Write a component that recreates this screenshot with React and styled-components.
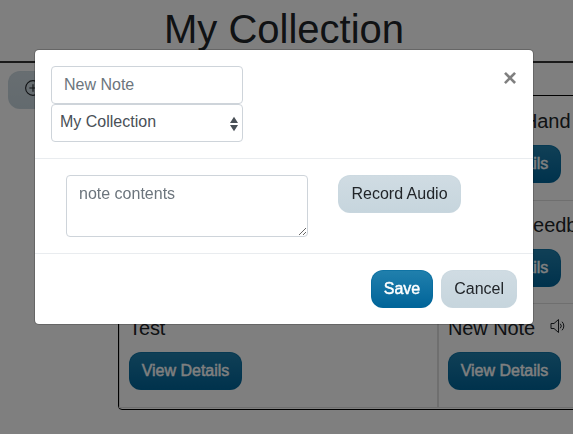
import React from "react";
import styled, { createGlobalStyle, css } from "styled-components";

const GlobalStyle = createGlobalStyle`
  *, *::before, *::after { box-sizing: border-box; }
  body {
    margin: 0;
    overflow: hidden;
    background: #fff;
    color: #212529;
    font: 400 16px/1.5 "Liberation Sans", Arial, sans-serif;
  }
`;

const Page = styled.div`
  height: 434px;
  overflow: hidden;
`;

const PageHeader = styled.header`
  height: 63px;
  padding-top: 5px;
  padding-right: 5px;
  border-bottom: 2px solid #343434;
  text-align: center;
`;

const PageTitle = styled.h1`
  margin: 0;
  font-size: 40px;
  font-weight: 400;
  line-height: 48px;
`;

const Content = styled.main`
  display: flex;
  align-items: flex-start;
`;

const variants = {
  primary: css`
    color: #fff;
    background: linear-gradient(180deg, #2180ad, #006499) border-box;
    border-color: rgba(0, 104, 156, 0.5);
    -webkit-text-stroke: 0.45px #fff;
  `,
  light: css`
    color: #212529;
    background: linear-gradient(180deg, #d0dce3, #c6d5dd) border-box;
    border-color: rgba(201, 215, 223, 0.5);
  `,
};

const Button = styled.button`
  display: inline-block;
  width: ${({ $width }) => ($width ? `${$width}px` : "auto")};
  height: 38px;
  padding: 6px 0;
  ${({ $width }) => !$width && "padding: 6px 12px;"}
  border: 1px solid transparent;
  border-radius: 12px;
  font: inherit;
  line-height: 24px;
  white-space: nowrap;
  ${({ $variant }) => variants[$variant]}
`;

const AddButton = styled(Button)`
  flex: none;
  display: flex;
  align-items: flex-start;
  width: 52px;
  margin: 8px 0 0 8px;
  padding: 8px 16px;
`;

const NoteGrid = styled.section`
  flex: none;
  display: grid;
  grid-template-columns: 319px 319px;
  grid-template-rows: 105px 103px 104px;
  margin: 32px 0 0 58px;
  padding-bottom: 1px;
  border: 1px solid #000;
  border-radius: 4px;
`;

const NoteCell = styled.article`
  display: flex;
  flex-direction: column;
  align-items: flex-start;
  justify-content: flex-end;
  padding: 0 9px ${({ $compact }) => ($compact ? 16 : 17)}px;
  border: solid #dfdfdf;
  border-width: 0 1px 1px;
`;

const NoteTitle = styled.h5`
  display: flex;
  align-items: center;
  gap: 15px;
  height: 24px;
  margin: 0 0 12px;
  padding-left: ${({ $indent }) => $indent || 0}px;
  font-size: 20px;
  font-weight: 400;
  line-height: 24px;
  letter-spacing: -0.1px;
`;

const Backdrop = styled.div`
  position: fixed;
  inset: 0;
  background: rgba(0, 0, 0, 0.5);
`;

const Modal = styled.div`
  width: 500px;
  margin: 49px 0 0 34px;
  border: 1px solid rgba(0, 0, 0, 0.2);
  border-radius: 5px;
  background: #fff;
  background-clip: padding-box;
`;

const ModalHeader = styled.div`
  display: flex;
  justify-content: space-between;
  align-items: flex-start;
  padding: 16px;
  border-bottom: 1px solid #e9ecef;
`;

const Fields = styled.div`
  display: flex;
  flex-direction: column;
  width: 192px;
`;

const control = css`
  display: block;
  width: 100%;
  margin: 0;
  border: 1px solid #ced4da;
  border-radius: 4px;
  background: #fff;
  color: #495057;
  font: inherit;
  outline: none;
  &::placeholder { color: #6c757d; opacity: 1; }
`;

const Input = styled.input`
  ${control}
  height: 38px;
  padding: 6px 12px;
`;

const SelectBox = styled.button`
  ${control}
  display: flex;
  align-items: center;
  justify-content: space-between;
  height: 38px;
  padding: 0 4px 2px 8px;
  text-align: left;
`;

const CloseButton = styled.button`
  width: 14px;
  margin: 0;
  padding: 0;
  border: 0;
  background: transparent;
  color: #000;
  opacity: 0.5;
  font: 700 24px/24px "Liberation Sans", Arial, sans-serif;
`;

const ModalBody = styled.div`
  display: flex;
  align-items: flex-start;
  gap: 30px;
  padding: 16px 31px;
`;

const TextArea = styled.textarea`
  ${control}
  width: 242px;
  height: 62px;
  padding: 6px 12px;
  line-height: 24px;
`;

const ModalFooter = styled.div`
  display: flex;
  justify-content: flex-end;
  gap: 8px;
  padding: 16px;
  border-top: 1px solid #e9ecef;
`;

const Icon = styled.svg`
  display: block;
  flex: none;
`;

const AudioIcon = styled(Icon)`
  margin-bottom: 5px;
`;

const SelectIcon = styled(Icon)`
  margin-top: 3px;
`;

const PlusIcon = () => (
  <Icon width="16" height="16" viewBox="0 0 16 16" fill="none" stroke="#212529" strokeWidth="1.1">
    <circle cx="8" cy="8" r="7.4" />
    <path d="M8 4.3v7.4M4.3 8h7.4" />
  </Icon>
);

const SpeakerIcon = () => (
  <AudioIcon width="17" height="16" viewBox="0 0 17 16" fill="none" stroke="#212529">
    <path d="M1 5.5h3L8.5 1.5v13L4 10.5H1z" strokeLinejoin="round" />
    <path d="M10.5 6a2.8 2.8 0 0 1 0 4M12.3 4a5.6 5.6 0 0 1 0 8" strokeLinecap="round" />
  </AudioIcon>
);

const SortIcon = () => (
  <SelectIcon width="8" height="16" viewBox="0 0 8 16" fill="#495057">
    <path d="M4 0.7l4 6.3H0zM0 9h8l-4 6.3z" />
  </SelectIcon>
);

const notes = [
  { id: 1 },
  { id: 2, title: "Hand", indent: 75 },
  { id: 3, compact: true },
  { id: 4, title: "Feedb", indent: 73, compact: true },
  { id: 5, title: "Test" },
  { id: 6, title: "New Note", audio: true },
];

export default function App() {
  return (
    <>
      <GlobalStyle />
      <Page>
        <PageHeader>
          <PageTitle>My Collection</PageTitle>
        </PageHeader>
        <Content>
          <AddButton $variant="light" aria-label="Add note">
            <PlusIcon />
          </AddButton>
          <NoteGrid>
            {notes.map(({ id, title, indent, audio, compact }) => (
              <NoteCell key={id} $compact={compact}>
                <NoteTitle $indent={indent}>
                  {title}
                  {audio && <SpeakerIcon />}
                </NoteTitle>
                <Button $variant="primary" $width={113}>View Details</Button>
              </NoteCell>
            ))}
          </NoteGrid>
        </Content>
      </Page>
      <Backdrop>
        <Modal role="dialog" aria-modal="true">
          <ModalHeader>
            <Fields>
              <Input placeholder="New Note" />
              <SelectBox aria-haspopup="listbox">
                My Collection
                <SortIcon />
              </SelectBox>
            </Fields>
            <CloseButton aria-label="Close">×</CloseButton>
          </ModalHeader>
          <ModalBody>
            <TextArea placeholder="note contents" />
            <Button $variant="light" $width={123}>Record Audio</Button>
          </ModalBody>
          <ModalFooter>
            <Button $variant="primary">Save</Button>
            <Button $variant="light">Cancel</Button>
          </ModalFooter>
        </Modal>
      </Backdrop>
    </>
  );
}
